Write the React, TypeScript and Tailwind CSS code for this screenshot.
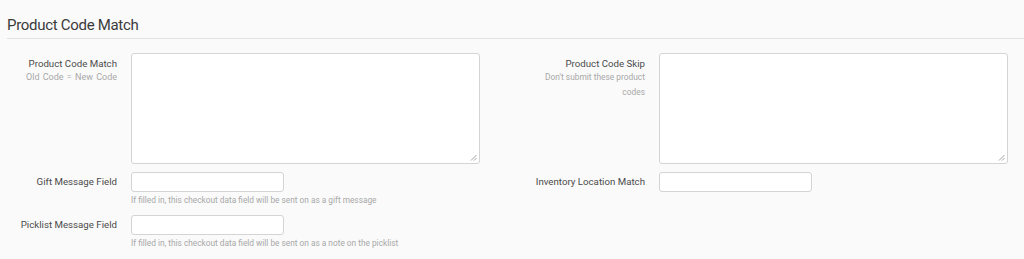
const font = { fontFamily: "Roboto, 'Liberation Sans', sans-serif" };

function Resize() {
  return (
    <svg className="absolute right-[2px] bottom-[2px]" width="7" height="7" viewBox="0 0 7 7">
      <path d="M1 6.5 L6.5 1 M4 6.5 L6.5 4" stroke="#999" strokeWidth="0.9" />
    </svg>
  );
}

function Area() {
  return (
    <div className="relative ml-[14px] w-[349px] h-[111px] bg-white border border-[#d4d4d4] rounded-[3px]">
      <Resize />
    </div>
  );
}

function Input() {
  return <div className="ml-[14px] w-[153px] h-[20px] bg-white border border-[#d4d4d4] rounded-[3px]" />;
}

export default function App() {
  return (
    <div className="w-[1024px] h-[259px] bg-[#fafafa] text-[#4a4a4a]" style={font}>
      <div className="pl-[7px] pt-[15px]">
        <h2 className="text-[15px] leading-[20px] tracking-[-0.3px] text-[#3a3a3a]">Product Code Match</h2>
        <div className="mt-[3px] border-b border-[#e2e2e2]" />
      </div>

      <div className="flex mt-[14px]">
        <div className="flex w-[528px]">
          <div className="w-[117px] text-right pt-[4px]">
            <div className="text-[9.7px] leading-[13px]">Product Code Match</div>
            <div className="text-[9px] leading-[15px] text-[#a8a8a8] [word-spacing:1px]">Old Code = New Code</div>
          </div>
          <Area />
        </div>
        <div className="flex">
          <div className="w-[117px] text-right pt-[4px]">
            <div className="text-[9.7px] leading-[13px]">Product Code Skip</div>
            <div className="text-[8.4px] leading-[15px] text-[#a8a8a8]">Don't submit these product codes</div>
          </div>
          <Area />
        </div>
      </div>

      <div className="flex mt-[8px]">
        <div className="w-[528px]">
          <div className="flex items-center">
            <div className="w-[117px] text-right text-[9.7px]">Gift Message Field</div>
            <Input />
          </div>
          <div className="ml-[131px] mt-[2px] text-[8.3px] leading-[12px] text-[#a8a8a8]">
            If filled in, this checkout data field will be sent on as a gift message
          </div>
          <div className="flex items-center mt-[9px]">
            <div className="w-[117px] text-right text-[9.7px]">Picklist Message Field</div>
            <Input />
          </div>
          <div className="ml-[131px] mt-[2px] text-[8.3px] leading-[12px] text-[#a8a8a8]">
            If filled in, this checkout data field will be sent on as a note on the picklist
          </div>
        </div>
        <div>
          <div className="flex items-center">
            <div className="w-[117px] text-right text-[9.7px] whitespace-nowrap">Inventory Location Match</div>
            <Input />
          </div>
        </div>
      </div>
    </div>
  );
}
